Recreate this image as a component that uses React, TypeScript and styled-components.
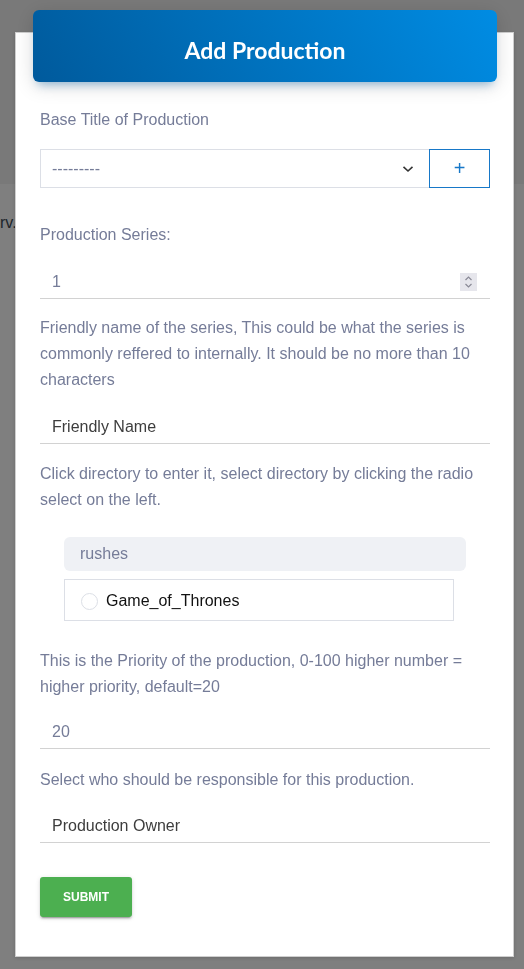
import React from 'react';
import styled, { createGlobalStyle } from 'styled-components';

const GlobalStyle = createGlobalStyle`
    html, body {
        margin: 0;
        padding: 0;
        background: #ffffff;
        font-family: "Liberation Sans", Arial, sans-serif;
    }
    * {
        box-sizing: border-box;
    }
`;

const textMuted = '#757c98';
const lineColor = '#d2d2d2';
const boxBorder = '#dcdfe6';
const accentBlue = '#1778c8';

// page that sits behind the modal
const BackPage = styled.div`
    min-height: 969px;
`;

const BackHeader = styled.div`
    height: 185px;
    background: #f3f3f3;
    border-bottom: 1px solid #ffffff;
`;

const BackText = styled.p`
    margin: 29px 0 0;
    font-size: 16px;
    line-height: 18px;
    color: #3a4a56;
`;

const Overlay = styled.div`
    position: fixed;
    inset: 0;
    background: rgba(0, 0, 0, 0.5);
    display: flex;
    align-items: flex-start;
    padding: 32px 10px 12px 15px;
`;

const Card = styled.div`
    width: 499px;
    background: #ffffff;
    border: 1px solid #cfcfcf;
    box-shadow: 0 1px 4px rgba(0, 0, 0, 0.16);
    padding: 0 23px 39px 24px;
    display: flex;
    flex-direction: column;
`;

const CardHeader = styled.div`
    margin: -23px -7px 0;
    height: 72px;
    padding-top: 7px;
    border-radius: 6px;
    background: linear-gradient(60deg, #005a9c, #008ce3);
    box-shadow: 0 4px 20px 0 rgba(0, 0, 0, 0.14),
        0 7px 10px -5px rgba(0, 110, 190, 0.4);
    display: flex;
    align-items: center;
    justify-content: center;
`;

const Title = styled.h4`
    margin: 0;
    font-family: Lato, "Liberation Sans", sans-serif;
    font-weight: 700;
    font-size: 23px;
    color: #ffffff;
`;

const Label = styled.p<{ mt: number }>`
    margin: ${(p) => p.mt}px 0 0;
    font-size: 16px;
    line-height: 26px;
    color: ${textMuted};
`;

const SelectRow = styled.div<{ mt: number }>`
    margin-top: ${(p) => p.mt}px;
    display: flex;
    height: 39px;
`;

const SelectBox = styled.div`
    flex: 1;
    display: flex;
    align-items: center;
    justify-content: space-between;
    border: 1px solid ${boxBorder};
    border-right: none;
    padding: 0 15px 0 11px;
    color: ${textMuted};
    font-size: 16px;
`;

const AddButton = styled.button`
    width: 61px;
    background: #ffffff;
    border: 1px solid ${accentBlue};
    color: ${accentBlue};
    font-family: "Liberation Sans", Arial, sans-serif;
    font-size: 20px;
    padding: 0;
    display: flex;
    align-items: center;
    justify-content: center;
`;

const Field = styled.div<{ mt: number }>`
    margin-top: ${(p) => p.mt}px;
    height: 36px;
    display: flex;
    align-items: center;
    border-bottom: 1px solid ${lineColor};
    padding: 2px 13px 0 12px;
`;

const FieldInput = styled.input`
    flex: 1;
    border: none;
    outline: none;
    background: transparent;
    padding: 0;
    font-family: "Liberation Sans", Arial, sans-serif;
    font-size: 16px;
    color: ${textMuted};
    &::placeholder {
        color: #3d3d3d;
        opacity: 1;
    }
`;

const Spinner = styled.div`
    width: 17px;
    height: 18px;
    background: #e6e6ec;
    display: flex;
    align-items: center;
    justify-content: center;
`;

const DirPanel = styled.div<{ mt: number }>`
    margin: ${(p) => p.mt}px 24px 0;
    display: flex;
    flex-direction: column;
    gap: 8px;
`;

const DirCrumb = styled.div`
    height: 34px;
    border-radius: 6px;
    background: #eff1f5;
    display: flex;
    align-items: center;
    padding-left: 16px;
    font-size: 16px;
    color: ${textMuted};
`;

const DirItem = styled.label`
    margin-right: 12px;
    height: 42px;
    border: 1px solid ${boxBorder};
    display: flex;
    align-items: center;
    gap: 8px;
    padding: 2px 0 0 16px;
    font-size: 16px;
    color: #111111;
`;

const Radio = styled.span`
    width: 17px;
    height: 17px;
    border-radius: 50%;
    border: 1px solid ${boxBorder};
    background: #ffffff;
`;

const SubmitButton = styled.button<{ mt: number }>`
    margin-top: ${(p) => p.mt}px;
    align-self: flex-start;
    width: 92px;
    height: 40px;
    border: none;
    border-radius: 3px;
    background: #4caf50;
    color: #ffffff;
    font-family: "Liberation Sans", Arial, sans-serif;
    font-size: 12px;
    font-weight: 700;
    box-shadow: 0 2px 2px 0 rgba(0, 0, 0, 0.14),
        0 3px 1px -2px rgba(0, 0, 0, 0.2), 0 1px 5px 0 rgba(0, 0, 0, 0.12);
`;

const Chevron = () => (
    <svg width="12" height="8" viewBox="0 0 12 8">
        <path
            d="M1.5 1.8 L6 6 L10.5 1.8"
            fill="none"
            stroke="#333"
            strokeWidth="1.6"
        />
    </svg>
);

const SpinIcon = () => (
    <svg width="9" height="14" viewBox="0 0 9 14">
        <path
            d="M1.5 5 L4.5 2 L7.5 5 M1.5 9 L4.5 12 L7.5 9"
            fill="none"
            stroke="#8a8a96"
            strokeWidth="1.2"
        />
    </svg>
);

export default function App() {
    return (
        <>
            <GlobalStyle />
            <BackPage>
                <BackHeader />
                <BackText>rv.</BackText>
            </BackPage>
            <Overlay>
                <Card>
                    <CardHeader>
                        <Title>Add Production</Title>
                    </CardHeader>

                    <Label mt={25}>Base Title of Production</Label>
                    <SelectRow mt={16}>
                        <SelectBox>
                            <span>---------</span>
                            <Chevron />
                        </SelectBox>
                        <AddButton>+</AddButton>
                    </SelectRow>

                    <Label mt={34}>Production Series:</Label>
                    <Field mt={15}>
                        <FieldInput defaultValue="1" />
                        <Spinner>
                            <SpinIcon />
                        </Spinner>
                    </Field>

                    <Label mt={16}>
                        Friendly name of the series, This could be what the
                        series is commonly reffered to internally. It should be
                        no more than 10 characters
                    </Label>
                    <Field mt={15}>
                        <FieldInput placeholder="Friendly Name" />
                    </Field>

                    <Label mt={17}>
                        Click directory to enter it, select directory by
                        clicking the radio select on the left.
                    </Label>
                    <DirPanel mt={24}>
                        <DirCrumb>rushes</DirCrumb>
                        <DirItem>
                            <Radio />
                            Game_of_Thrones
                        </DirItem>
                    </DirPanel>

                    <Label mt={27}>
                        This is the Priority of the production, 0-100 higher
                        number = higher priority, default=20
                    </Label>
                    <Field mt={13}>
                        <FieldInput defaultValue="20" />
                    </Field>

                    <Label mt={18}>
                        Select who should be responsible for this production.
                    </Label>
                    <Field mt={14}>
                        <FieldInput placeholder="Production Owner" />
                    </Field>

                    <SubmitButton mt={34}>SUBMIT</SubmitButton>
                </Card>
            </Overlay>
        </>
    );
}
